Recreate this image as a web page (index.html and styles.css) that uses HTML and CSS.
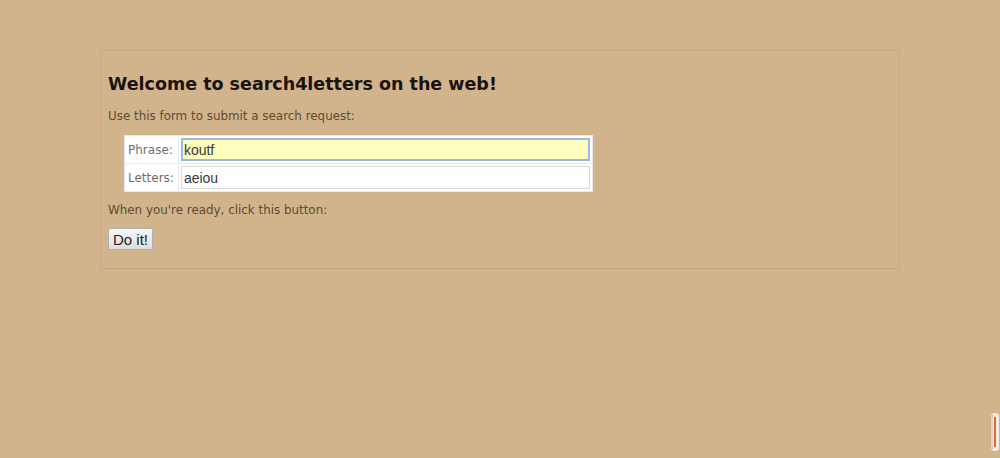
FILE: index.html
```html
<!DOCTYPE html>
<html lang="en">
<head>
    <meta charset="UTF-8">
    <meta name="viewport" content="width=device-width, initial-scale=1.0">
    <title>search4letters</title>
    <link rel="stylesheet" href="styles.css">
</head>
<body>

    <div class="wrapper">
        <h2>Welcome to search4letters on the web!</h2>

        <form method="POST" action="/search4">
            <p>Use this form to submit a search request:</p>
            <table>
                <tr>
                    <td class="label">Phrase:</td>
                    <td><input class="focus" name="phrase" type="text" value="koutf"></td>
                </tr>
                <tr>
                    <td class="label">Letters:</td>
                    <td><input name="letters" type="text" value="aeiou"></td>
                </tr>
            </table>
            <p>When you're ready, click this button:</p>
            <p><input class="btn" value="Do it!" type="submit"></p>
        </form>
    </div>

    <div class="scroll"></div>

</body>
</html>
```

FILE: styles.css
```css
*{
    margin: 0;
    padding: 0;
}
body{
    background-color: #d2b48c;
    font-family: "DejaVu Sans", Verdana, sans-serif;
    overflow: hidden;
}
/* 页面主体框 */
.wrapper{
    width: 784px;
    margin: 50px auto 0;
    padding: 20px 7px 18px;
    border: 1px solid #c7a880;
}
h2{
    font-size: 17.5px;
    color: #1a120c;
    line-height: 27px;
    margin-top: 0;
}
p{
    font-size: 11.9px;
    color: #5e4a33;
    line-height: 16px;
    margin-top: 10px;
}
table{
    margin: 11px 0 0 16px;
    background-color: #fff;
    border-collapse: collapse;
    border: 1px solid #e6e6ec;
}
td{
    padding: 2px;
    border: 1px solid #e9e9ef;
}
.label{
    font-size: 12px;
    color: #707070;
    padding: 0 4px 0 3px;
}
input{
    width: 409px;
    height: 23px;
    box-sizing: border-box;
    border: 1px solid #d8d8d8;
    font-family: "Liberation Sans", Arial, sans-serif;
    font-size: 14px;
    color: #3a3a3a;
    padding: 0 2px;
    outline: none;
}
.focus{
    background-color: #fdfdbd;
    border: 2px solid #9db8e0;
    padding: 0 1px;
}
.btn{
    width: auto;
    height: 22px;
    padding: 0 4px;
    font-size: 15px;
    color: #222;
    background: linear-gradient(#f6f6f6, #dedede);
    border: 1px solid #b0b0b0;
    border-radius: 2px;
}
/* 右下角滚动条 */
.scroll{
    position: fixed;
    right: 1px;
    bottom: 7px;
    width: 6px;
    height: 38px;
    border-radius: 3px;
    background-color: #f4ece2;
    border-left: 2px solid #e7d2c0;
}
.scroll::after{
    content: "";
    display: block;
    width: 2px;
    height: 30px;
    margin: 4px 0 0 1px;
    background-color: #d96a3a;
}
```
